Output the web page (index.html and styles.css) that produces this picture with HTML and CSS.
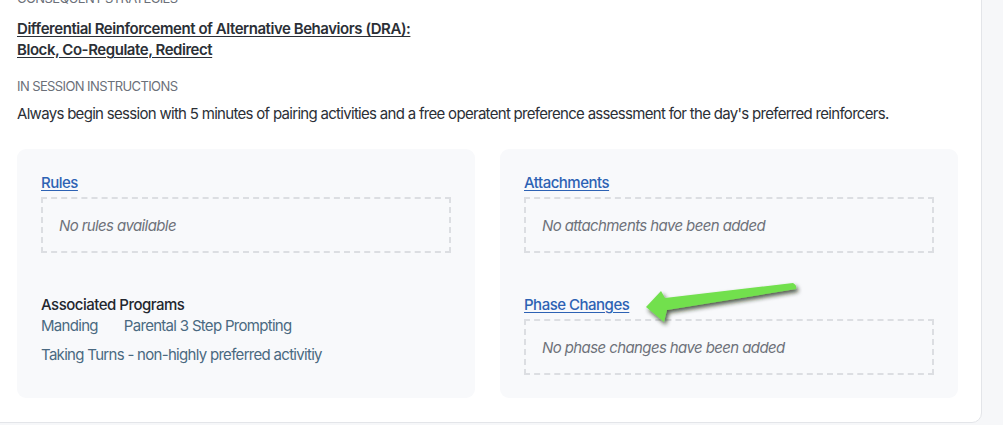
FILE: index.html
```html
<!DOCTYPE html>
<html>
<head>
    <link rel="stylesheet" href="styles.css">
</head>
<body>
    <div class="card">
        <div class="label">CONSEQUENT STRATEGIES</div>
        <a class="strategy" href="#">Differential Reinforcement of Alternative Behaviors (DRA): <br>Block, Co-Regulate, Redirect</a>

        <div class="label session-label">IN SESSION INSTRUCTIONS</div>
        <p class="instructions">Always begin session with 5 minutes of pairing activities and a free operatent preference assessment for the day's preferred reinforcers.</p>

        <div class="panels">
            <div class="panel">
                <div class="section">
                    <a class="section-link" href="#">Rules</a>
                    <div class="empty">No rules available</div>
                </div>
                <div class="section">
                    <div class="section-title">Associated Programs</div>
                    <div class="programs">
                        <a href="#">Manding</a>
                        <a href="#">Parental 3 Step Prompting</a>
                        <a href="#">Taking Turns - non-highly preferred activitiy</a>
                    </div>
                </div>
            </div>
            <div class="panel">
                <div class="section">
                    <a class="section-link" href="#">Attachments</a>
                    <div class="empty">No attachments have been added</div>
                </div>
                <div class="section">
                    <a class="section-link" href="#">Phase Changes</a>
                    <div class="empty">No phase changes have been added</div>
                </div>
            </div>
        </div>

        <svg class="arrow" width="170" height="55" viewBox="0 0 170 55">
            <defs>
                <filter id="shadow" x="-20%" y="-40%" width="140%" height="180%">
                    <feDropShadow dx="2" dy="3" stdDeviation="2" flood-color="#1a2a10" flood-opacity="0.75"/>
                </filter>
            </defs>
            <path d="M4 27 L19 11 L23 18 L151 3 Q155 5 154 9 L25 30 L22 42 Z" fill="#72e04e" filter="url(#shadow)"/>
        </svg>
    </div>
</body>
</html>
```

FILE: styles.css
```css
body {
    margin: 0;
    background-color: #f6f7f9;
    font-family: Inter, "Noto Sans", sans-serif;
    color: #2b2f36;
    overflow: hidden;
}

.card {
    position: relative;
    width: 983px;
    margin-top: -12px;
    margin-left: -1px;
    padding: 0 0 24px 17px;
    box-sizing: border-box;
    background-color: #fff;
    border: 1px solid #e3e5e9;
    border-radius: 0 0 10px 0;
}

.label {
    font-size: 13px;
    color: #6b7079;
    letter-spacing: -0.6px;
    line-height: 18px;
}

.strategy {
    display: block;
    margin-top: 11px;
    font-size: 15px;
    font-weight: 600;
    line-height: 21px;
    color: #2b2f36;
    letter-spacing: -0.45px;
    text-decoration: underline;
    text-underline-offset: 2px;
}

.session-label {
    margin-top: 17px;
}

.instructions {
    margin: 9px 0 0;
    font-size: 15px;
    line-height: 20px;
    letter-spacing: -0.7px;
    color: #2b2f36;
}

.panels {
    display: grid;
    grid-template-columns: 458px 458px;
    gap: 25px;
    margin-top: 25px;
}

.panel {
    display: flex;
    flex-direction: column;
    gap: 42px;
    padding: 24px 24px 23px;
    background-color: #f8f9fb;
    border-radius: 9px;
}

.section-link {
    display: block;
    width: fit-content;
    font-size: 15px;
    font-weight: 500;
    line-height: 20px;
    color: #2d62b4;
    letter-spacing: -0.5px;
    text-decoration: underline;
    text-underline-offset: 2px;
}

.empty {
    margin-top: 4px;
    height: 52px;
    padding: 0 16px;
    display: flex;
    align-items: center;
    border: 2px dashed #dcdee2;
    font-size: 15px;
    font-style: italic;
    letter-spacing: -0.6px;
    color: #6e727a;
}

.section-title {
    font-size: 15px;
    font-weight: 500;
    line-height: 20px;
    letter-spacing: -0.5px;
    color: #23272e;
}

.programs {
    display: flex;
    flex-wrap: wrap;
    column-gap: 26px;
    row-gap: 9px;
    margin-top: 1px;
}

.programs a {
    font-size: 15px;
    line-height: 20px;
    letter-spacing: -0.7px;
    color: #4a6981;
    text-decoration: none;
}

.arrow {
    position: absolute;
    left: 642px;
    top: 291px;
}
```
